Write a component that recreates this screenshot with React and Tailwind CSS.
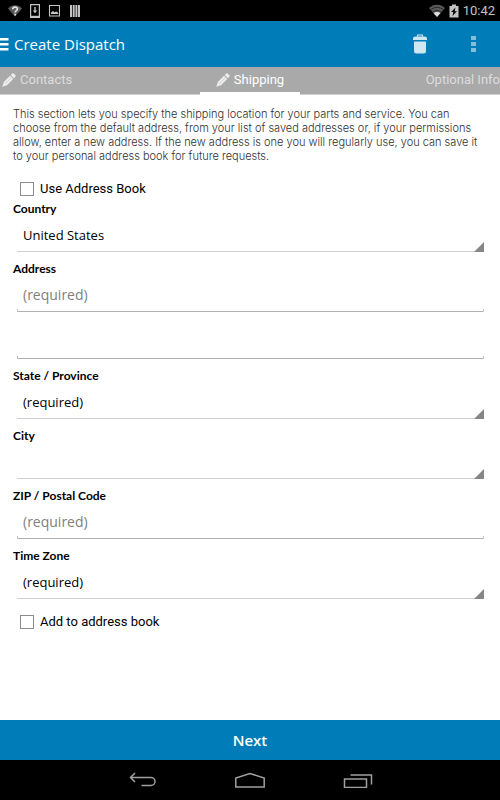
import { useState } from 'react';

const StatusBar = () => (
  <div className="flex h-[21px] items-center justify-between bg-black pl-2 pr-[5px] text-[#c4c4c4]">
    <div className="flex items-center gap-2">
      <svg className="h-[14px] w-[14px]" viewBox="0 0 14 14">
        <path d="M0 4.500C4 .300 10 .300 14 4.500L7 12.500z" fill="#5a5a5a" />
        <path d="M4.800 5.200c0-2.800 4.600-2.600 4.600-.200 0 1.700-2.200 1.700-2.200 3.500M7.200 9.800v1.800" fill="none" stroke="#e4e4e4" strokeWidth="1.600" />
      </svg>
      <svg className="h-[14px] w-[10px]" viewBox="0 0 10 14" fill="none" stroke="currentColor">
        <path d="M.600.600h8.800v12.800H.600z" strokeWidth="1.200" />
        <path d="M0 12.700h10" strokeWidth="1.800" />
        <path d="M5 3v4" strokeWidth="1.400" />
        <path d="M2.800 6.500h4.400L5 9.300z" fill="currentColor" stroke="none" />
      </svg>
      <svg className="h-[14px] w-[12px]" viewBox="0 0 12 14">
        <path d="M1.500 1.500h10v10.500h-10z" fill="none" stroke="currentColor" strokeWidth="1.100" />
        <path d="M3 10V8.500l2-1.500 1.500 1.200 2-.8 1.700 1.600v1z" fill="currentColor" />
      </svg>
      <svg className="h-[14px] w-[12px]" viewBox="0 0 12 14" fill="currentColor">
        <path d="M2 1h2v12H2zM4.700 1h2v12h-2zM7.400 1h2v12h-2zM10 1h2v12h-2z" />
      </svg>
    </div>
    <div className="flex items-center gap-1">
      <svg className="h-[13px] w-4" viewBox="0 0 16 13">
        <path d="M0 4C4.500-.500 11.500-.500 16 4L8 13z" fill="#5a5a5a" />
        <path d="M1.600 5.800C5 2.600 11 2.600 14.400 5.800M3.600 8.200C6 6 10 6 12.400 8.200" fill="none" stroke="#1c1c1c" strokeWidth=".8" />
        <path d="M4.500 9C6.500 7.500 9.500 7.500 11.500 9L8 13z" fill="#e0e0e0" />
      </svg>
      <svg className="h-[14px] w-[10px]" viewBox="0 0 10 14">
        <path d="M.500 2H3V.500h4V2h2.500v11.500h-9z" fill="#c4c4c4" />
        <path d="M6.500 3.500L2 8h2.300L3.500 12 8 7.200H5.700z" fill="#000" />
      </svg>
      <span className="font-[Roboto] text-[13px] leading-5">10:42</span>
    </div>
  </div>
);

const PencilIcon = () => (
  <svg className="h-[14px] w-[14px] shrink-0" viewBox="0 0 14 14" fill="#ececec">
    <path d="M.300 13.700l1.500-4.700L8 2.800 11.200 6l-6.200 6.200zM8.700 2.100L10.300.600q.700-.600 1.400 0l1.700 1.700q.600.700 0 1.400l-1.500 1.600z" />
    <path d="M3.300 10.700l5.500-5.500" stroke="#a9a9a9" strokeWidth=".4" />
  </svg>
);

const Header = () => (
  <header className="flex h-[46px] items-center bg-[#007db8] text-white">
    <button type="button" aria-label="Open menu" className="flex h-8 w-[14px] items-center">
      <svg className="h-[13px] w-[9px]" viewBox="0 0 9 13" fill="currentColor">
        <path d="M0 0h8.500v2.500H0zM0 5h8.500v2.500H0zM0 10h8.500v2.500H0z" />
      </svg>
    </button>
    <h1 className="flex-1 font-['Open_Sans'] text-[15px] font-normal leading-6">Create Dispatch</h1>
    <button type="button" aria-label="Delete" className="flex w-[54px] justify-center">
      <svg className="h-5 w-[14px]" viewBox="0 0 14 20" fill="#d0e7f2">
        <path d="M4 2.500V.500h6v2H8.700V1.600H5.300v.9z" />
        <path d="M0 6V4.500Q0 2.500 3 2.500h8q3 0 3 2V6z" />
        <path d="M1 7.500h12v9.500q0 2.500-2.500 2.500h-7Q1 19.500 1 17z" />
      </svg>
    </button>
    <button type="button" aria-label="More options" className="flex w-[53px] justify-center">
      <svg className="h-[18px] w-[5px]" viewBox="0 0 5 18" fill="#80bedb">
        <path d="M0 1h5v4H0zM0 7h5v4H0zM0 13h5v4H0z" />
      </svg>
    </button>
  </header>
);

const Tabs = () => (
  <nav className="grid h-7 grid-cols-5 overflow-hidden bg-[#a9a9a9] font-[Roboto] text-[13px]">
    <a href="#contacts" className="col-span-2 flex items-center gap-1 border-b border-[#d0d0d0] pb-[2px] pl-[2px] text-[#dcdcdc]">
      <PencilIcon />
      Contacts
    </a>
    <a href="#shipping" aria-current="page" className="flex items-center justify-center gap-1 border-b-3 border-white text-white">
      <PencilIcon />
      Shipping
    </a>
    <a href="#optional" className="col-span-2 flex items-center justify-end whitespace-nowrap border-b border-[#d0d0d0] pb-[2px] text-[#dcdcdc]">
      Optional Info
    </a>
  </nav>
);

const FieldLabel = ({ htmlFor, children }) => (
  <label htmlFor={htmlFor} className="block font-[Lato] text-[12px] font-bold leading-4">
    {children}
  </label>
);

const SelectField = ({ id, label, options }) => (
  <div className="mb-[9px]">
    <FieldLabel htmlFor={id}>{label}</FieldLabel>
    <div className="relative ml-1">
      <select id={id} className="block h-[35px] w-full appearance-none border-b border-[#cfcfcf] bg-transparent pl-[6px] pt-[3px] text-[13px]">
        {options.map((option) => (
          <option key={option}>{option}</option>
        ))}
      </select>
      <svg className="pointer-events-none absolute bottom-0 right-0 h-[10px] w-[10px]" viewBox="0 0 10 10">
        <path d="M10 0v10H0z" fill="#868686" />
      </svg>
    </div>
  </div>
);

const TextInput = ({ id, placeholder, ariaLabel }) => (
  <div className="relative ml-1">
    <input
      id={id}
      type="text"
      aria-label={ariaLabel}
      placeholder={placeholder}
      className="block h-[35px] w-full border-b border-[#b0b0b0] bg-transparent pl-[6px] text-[14px] outline-none placeholder:text-[#808080]"
    />
    <span className="pointer-events-none absolute bottom-0 left-0 right-0 h-[3px] border-x border-[#c4c4c4]" />
  </div>
);

const CheckboxRow = ({ id, label, checked, onChange }) => (
  <div className="flex h-5 items-center gap-[6px] pl-[7px] font-[Roboto] text-[13px]">
    <input
      id={id}
      type="checkbox"
      checked={checked}
      onChange={(e) => onChange(e.target.checked)}
      className="h-[14px] w-[14px] appearance-none border border-[#8c8c8c] bg-white checked:bg-[#007db8]"
    />
    <label htmlFor={id}>{label}</label>
  </div>
);

const NavigationBar = () => (
  <div className="flex h-10 items-center justify-center gap-[78px] bg-black text-[#a0a0a0]">
    <button type="button" aria-label="Back">
      <svg className="h-4 w-[30px]" viewBox="0 0 30 16" fill="none" stroke="currentColor" strokeWidth="1.500">
        <path d="M8 1L3.500 5.500 8 10M3.500 5.500H24a4 4 0 0 1 0 8H14.500" />
      </svg>
    </button>
    <button type="button" aria-label="Home">
      <svg className="h-4 w-[30px]" viewBox="0 0 30 16" fill="none" stroke="currentColor" strokeWidth="1.500">
        <path d="M.800 15V6L15 1.500 29.200 6v9z" />
      </svg>
    </button>
    <button type="button" aria-label="Recent apps">
      <svg className="h-4 w-[30px]" viewBox="0 0 30 16" fill="none" stroke="currentColor" strokeWidth="1.500">
        <path d="M1.500 7h22v8.500h-22zM7.500 3h21v9.500" />
      </svg>
    </button>
  </div>
);

const App = () => {
  const [useAddressBook, setUseAddressBook] = useState(false);
  const [addToBook, setAddToBook] = useState(false);

  return (
    <div className="flex min-h-screen flex-col bg-white font-['Open_Sans',sans-serif] text-black">
      <StatusBar />
      <Header />
      <Tabs />

      <form id="shipping" className="flex flex-1 flex-col" onSubmit={(e) => e.preventDefault()}>
        <div className="flex-1 pl-[13px] pr-4 pt-3">
          <p className="mb-4 font-[Inter] text-[11px] font-light leading-[14px] text-[#303030]">
            This section lets you specify the shipping location for your parts and service. You can
            choose from the default address, from your list of saved addresses or, if your permissions
            allow, enter a new address. If the new address is one you will regularly use, you can save it
            to your personal address book for future requests.
          </p>

          <div className="mb-[2px]">
            <CheckboxRow id="use-book" label="Use Address Book" checked={useAddressBook} onChange={setUseAddressBook} />
          </div>

          <SelectField id="country" label="Country" options={['United States', 'Canada']} />

          <div className="mb-[9px]">
            <FieldLabel htmlFor="address">Address</FieldLabel>
            <TextInput id="address" placeholder="(required)" />
            <div className="mt-3">
              <TextInput id="address2" ariaLabel="Address line 2" />
            </div>
          </div>

          <SelectField id="state" label="State / Province" options={['(required)']} />
          <SelectField id="city" label="City" options={['']} />

          <div className="mb-[9px]">
            <FieldLabel htmlFor="zip">ZIP / Postal Code</FieldLabel>
            <TextInput id="zip" placeholder="(required)" />
          </div>

          <SelectField id="timezone" label="Time Zone" options={['(required)']} />

          <div className="pt-1">
            <CheckboxRow id="add-book" label="Add to address book" checked={addToBook} onChange={setAddToBook} />
          </div>
        </div>

        <button type="submit" className="h-10 w-full bg-[#007db8] text-[15px] font-semibold text-white">
          Next
        </button>
      </form>

      <NavigationBar />
    </div>
  );
};

export default App;
